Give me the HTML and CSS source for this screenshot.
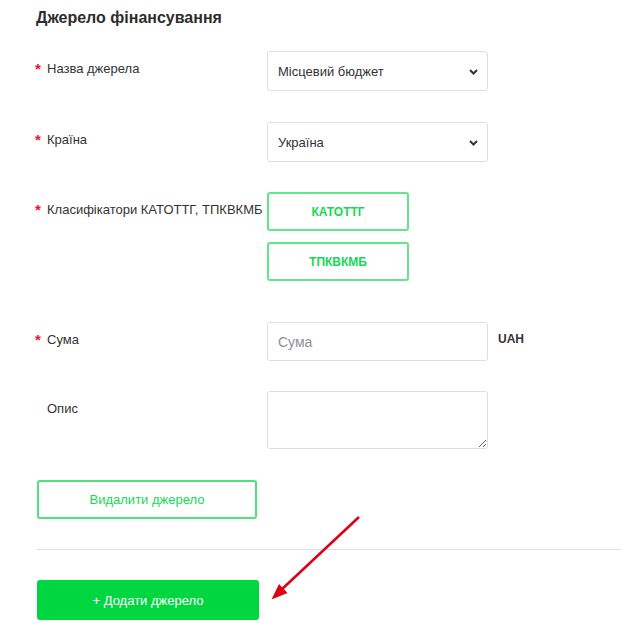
FILE: index.html
```html
<!DOCTYPE html>
<html lang="uk">
<head>
<meta charset="utf-8">
<title>Джерело фінансування</title>
<link rel="stylesheet" href="styles.css">
</head>
<body>
<div class="page">
  <h2 class="title">Джерело фінансування</h2>

  <div class="row first">
    <div class="label"><span class="req">*</span>Назва джерела</div>
    <div class="control">
      <div class="select"><span>Місцевий бюджет</span>
        <svg class="chev" width="9" height="6" viewBox="0 0 9 6"><path d="M1 1 L4.5 4.5 L8 1" fill="none" stroke="#333" stroke-width="2"/></svg>
      </div>
    </div>
  </div>

  <div class="row">
    <div class="label"><span class="req">*</span>Країна</div>
    <div class="control">
      <div class="select"><span>Україна</span>
        <svg class="chev" width="9" height="6" viewBox="0 0 9 6"><path d="M1 1 L4.5 4.5 L8 1" fill="none" stroke="#333" stroke-width="2"/></svg>
      </div>
    </div>
  </div>

  <div class="row">
    <div class="label"><span class="req">*</span>Класифікатори КАТОТТГ, ТПКВКМБ</div>
    <div class="control stack">
      <button class="btn-class">КАТОТТГ</button>
      <button class="btn-class">ТПКВКМБ</button>
    </div>
  </div>

  <div class="row">
    <div class="label"><span class="req">*</span>Сума</div>
    <div class="control inline">
      <input class="input" type="text" placeholder="Сума">
      <span class="unit">UAH</span>
    </div>
  </div>

  <div class="row last">
    <div class="label plain">Опис</div>
    <div class="control">
      <textarea class="textarea"></textarea>
    </div>
  </div>

  <button class="btn-outline">Видалити джерело</button>
  <div class="divider"></div>
  <button class="btn-primary">+ Додати джерело</button>

  <svg class="arrow" width="621" height="629" viewBox="0 0 621 629">
    <line x1="359" y1="517" x2="280" y2="591" stroke="#dc0012" stroke-width="2.5"/>
    <polygon points="271.5,599.5 287.5,593 279,584" fill="#dc0012"/>
  </svg>
</div>
</body>
</html>
```

FILE: styles.css
```css
* { box-sizing: border-box; }

body {
  margin: 0;
  background: #ffffff;
  font-family: "Liberation Sans", Arial, sans-serif;
  color: #333333;
}

.page {
  position: relative;
  padding: 8px 0 0 35px;
  min-height: 629px;
}

.title {
  margin: 0 0 23px 1px;
  font-size: 16px;
  line-height: 20px;
  font-weight: bold;
  color: #2d2d2d;
}

.row {
  display: flex;
  align-items: flex-start;
  margin-bottom: 30px;
}

.row.first { margin-bottom: 31px; }
.row.last { margin-bottom: 31px; }

.label {
  width: 232px;
  flex: none;
  padding-top: 10px;
  font-size: 13px;
  line-height: 15px;
  color: #333333;
}

.label.plain { padding-left: 12px; }

.req {
  display: inline-block;
  width: 12px;
  color: #ee1133;
  font-weight: bold;
  font-size: 15px;
  line-height: 15px;
  vertical-align: top;
}

.control { flex: none; }

.stack {
  display: flex;
  flex-direction: column;
  gap: 11px;
  padding-bottom: 11px;
}

.inline {
  display: flex;
  align-items: flex-start;
}

.select {
  width: 221px;
  height: 40px;
  border: 1px solid #dddde3;
  border-radius: 3px;
  display: flex;
  align-items: center;
  justify-content: space-between;
  padding: 0 9px 0 10px;
  font-size: 13px;
  color: #333333;
  background: #ffffff;
}

.chev { display: block; margin-top: 1px; }

.btn-class {
  width: 142px;
  height: 39px;
  border: 2px solid #62e58b;
  border-radius: 3px;
  background: #ffffff;
  color: #14d953;
  font-family: "Liberation Sans", Arial, sans-serif;
  font-size: 12px;
  font-weight: bold;
  padding: 0;
}

.input {
  width: 221px;
  height: 39px;
  border: 1px solid #dddde3;
  border-radius: 3px;
  padding: 0 10px;
  font-family: "Liberation Sans", Arial, sans-serif;
  font-size: 14px;
  color: #333333;
  outline: none;
}

.input::placeholder { color: #8f8f96; }

.unit {
  margin-left: 10px;
  padding-top: 10px;
  font-size: 12px;
  line-height: 15px;
  font-weight: bold;
  color: #333333;
}

.textarea {
  display: block;
  width: 221px;
  height: 58px;
  border: 1px solid #dddde3;
  border-radius: 3px;
  margin: 0;
  padding: 6px 10px;
  font-family: "Liberation Sans", Arial, sans-serif;
  font-size: 13px;
  outline: none;
}

.btn-outline {
  display: block;
  margin: 0 0 0 2px;
  width: 220px;
  height: 39px;
  border: 2px solid #4fe27c;
  border-radius: 3px;
  background: #ffffff;
  color: #14d953;
  font-family: "Liberation Sans", Arial, sans-serif;
  font-size: 13px;
  padding: 0;
}

.divider {
  margin: 30px 0 30px 2px;
  height: 1px;
  background: #dcdce2;
}

.btn-primary {
  display: block;
  margin: 0 0 0 2px;
  width: 222px;
  height: 40px;
  border: none;
  border-radius: 3px;
  background: #00d640;
  color: #ffffff;
  font-family: "Liberation Sans", Arial, sans-serif;
  font-size: 13px;
  padding: 0;
}

.arrow {
  position: absolute;
  left: 0;
  top: 0;
  pointer-events: none;
}
```
